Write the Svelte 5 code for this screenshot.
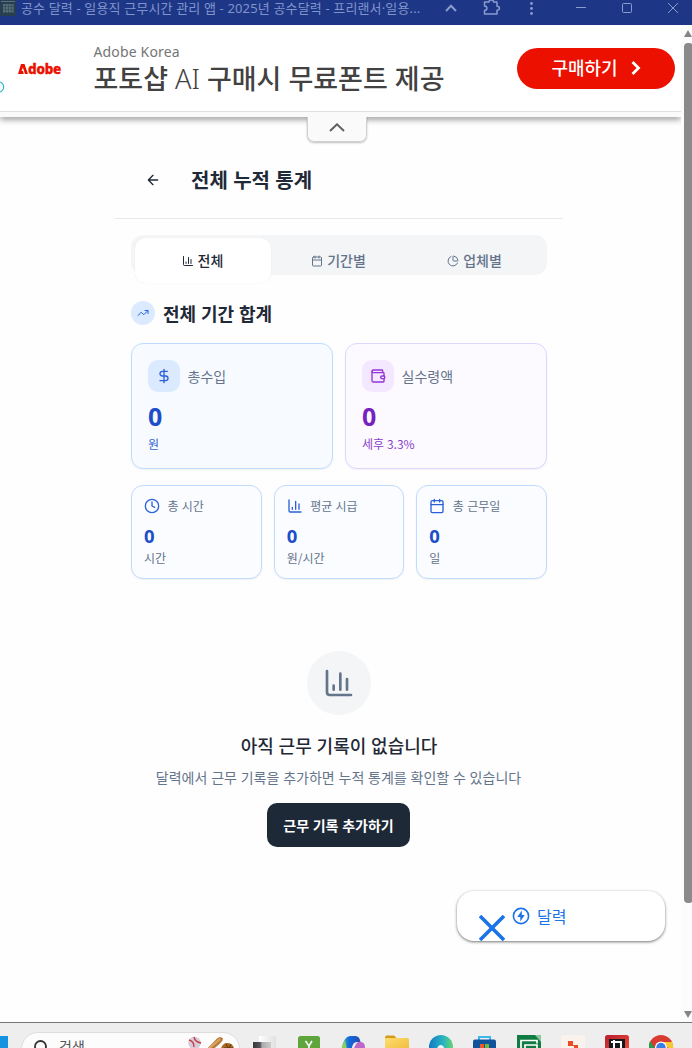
<script>
  const tabs = [
    { label: '전체', icon: 'chart', active: true },
    { label: '기간별', icon: 'calendar', active: false },
    { label: '업체별', icon: 'pie', active: false },
  ];
  const totals = [
    { label: '총수입', value: '0', note: '원', icon: 'dollar', tone: 'blue' },
    { label: '실수령액', value: '0', note: '세후 3.3%', icon: 'wallet', tone: 'purple' },
  ];
  const stats = [
    { label: '총 시간', value: '0', unit: '시간', icon: 'clock' },
    { label: '평균 시급', value: '0', unit: '원/시간', icon: 'chart' },
    { label: '총 근무일', value: '0', unit: '일', icon: 'calendar' },
  ];
</script>

{#snippet icon(name, size, stroke = 2)}
  <svg class="icon" width={size} height={size} viewBox="0 0 24 24" fill="none" stroke="currentColor" stroke-width={stroke} stroke-linecap="round" stroke-linejoin="round">
    {#if name === 'chart'}
      <path d="M3 3v16a2 2 0 0 0 2 2h16M18 17V9M13 17V5M8 17v-3" />
    {:else if name === 'calendar'}
      <path d="M8 2v4M16 2v4M3 10h18" /><rect x="3" y="4" width="18" height="18" rx="2" />
    {:else if name === 'pie'}
      <path d="M21 12c.55 0 1-.45.95-1a10 10 0 0 0-8.95-8.95c-.55-.05-1 .4-1 .95v8a1 1 0 0 0 1 1z" /><path d="M21.21 15.89A10 10 0 1 1 8 2.83" />
    {:else if name === 'trend'}
      <path d="M22 7l-8.5 8.5-5-5L2 17M16 7h6v6" />
    {:else if name === 'dollar'}
      <path d="M12 2v20M17 5H9.5a3.5 3.5 0 0 0 0 7h5a3.5 3.5 0 0 1 0 7H6" />
    {:else if name === 'wallet'}
      <path d="M19 7V4a1 1 0 0 0-1-1H5a2 2 0 0 0 0 4h15a1 1 0 0 1 1 1v4h-3a2 2 0 0 0 0 4h3a1 1 0 0 0 1-1v-2a1 1 0 0 0-1-1" /><path d="M3 5v14a2 2 0 0 0 2 2h15a1 1 0 0 0 1-1v-4" />
    {:else if name === 'clock'}
      <circle cx="12" cy="12" r="10" /><path d="M12 6v6l4 2" />
    {:else if name === 'back'}
      <path d="M12 19l-7-7 7-7M19 12H5" />
    {/if}
  </svg>
{/snippet}

<div class="window">
  <header class="titlebar">
    <svg class="favicon" width="16" height="16" viewBox="0 0 16 16">
      <rect width="16" height="16" rx="1.5" fill="#283f50" />
      <path d="M1 1.5h14" stroke="#587080" />
      <path d="M3 5h10M3 8h10M3 11h10M4 4v9M7 4v9M10 4v9M13 4v9" stroke="#6f8790" stroke-width=".8" />
    </svg>
    <span class="title">공수 달력 - 일용직 근무시간 관리 앱 - 2025년 공수달력 - 프리랜서·일용...</span>
    <svg class="controls" width="260" height="25" viewBox="0 0 260 25" fill="none" stroke="#899cd0" stroke-width="1.2">
      <path d="M14 11l5-5.2L24 11" stroke-width="2" />
      <path d="M52.500 2h4.500c0-2.600 4.500-2.600 4.500 0H65v4.200c3.200 0 3.200 4 0 4V14H52.500v-3.500c3.200-.2 3.200-4.400 0-4.600z" stroke-width="1.5" stroke-linejoin="round" />
      <g fill="#899cd0" stroke="none"><circle cx="99.5" cy="3.5" r="1.4" /><circle cx="99.5" cy="8.5" r="1.4" /><circle cx="99.5" cy="13.5" r="1.4" /></g>
      <path d="M144 7.5h10" stroke-width="1" />
      <rect x="190.5" y="3.5" width="9" height="9" rx="1" stroke-width="1" />
      <path d="M236 3l10 10M246 3l-10 10" stroke-width="1" />
    </svg>
  </header>

  <div class="viewport">
    <div class="page">
      <section class="ad">
        <svg class="adinfo" width="5" height="14" viewBox="0 0 5 14"><circle cx="-1.5" cy="7" r="5.2" fill="none" stroke="#27b5ca" stroke-width="1.1" /></svg>
        <div class="brand"><svg width="10" height="10" viewBox="0 0 10 10"><path fill="#eb1000" d="M3 0h3.5L10 10H7L4.9 3.5 3.6 7H5l.8 3H0z" /></svg><span>dobe</span></div>
        <div class="adtext">
          <span class="advertiser">Adobe Korea</span>
          <strong>포토샵 <i>AI</i> 구매시 무료폰트 제공</strong>
        </div>
        <button class="buy">구매하기
          <svg width="10" height="14" viewBox="0 0 10 14" fill="none" stroke="#fff" stroke-width="2.8"><path d="M1.5 1l6 6-6 6" /></svg>
        </button>
      </section>
      <div class="adedge">
        <div class="collapse"><svg width="16" height="9" viewBox="0 0 16 9" fill="none" stroke="#616161" stroke-width="2"><path d="M1 8l7-6.700L15 8" /></svg></div>
      </div>

      <main>
        <div class="pagehead">
          <span class="back">{@render icon('back', 16)}</span>
          <h1>전체 누적 통계</h1>
        </div>
        <div class="body">
          <nav>
            {#each tabs as tab}
              <button class="tab" class:active={tab.active}>{@render icon(tab.icon, 12)}<span>{tab.label}</span></button>
            {/each}
          </nav>
          <div class="section">
            <span class="dot">{@render icon('trend', 12)}</span>
            <h2>전체 기간 합계</h2>
          </div>
          <div class="totals">
            {#each totals as card}
              <article class={card.tone}>
                <div class="cardhead"><span class="badge">{@render icon(card.icon, 16)}</span><span>{card.label}</span></div>
                <b>{card.value}</b>
                <small>{card.note}</small>
              </article>
            {/each}
          </div>
          <div class="stats">
            {#each stats as card}
              <article>
                <div class="stathead">{@render icon(card.icon, 16)}<span>{card.label}</span></div>
                <b>{card.value}</b>
                <small>{card.unit}</small>
              </article>
            {/each}
          </div>
          <div class="empty">
            <span class="circle">{@render icon('chart', 32)}</span>
            <h3>아직 근무 기록이 없습니다</h3>
            <p>달력에서 근무 기록을 추가하면 누적 통계를 확인할 수 있습니다</p>
            <button class="add">근무 기록 추가하기</button>
          </div>
        </div>
      </main>

      <div class="fab">
        <svg class="close" width="26" height="26" viewBox="0 0 26 26" stroke="#1a73e8" stroke-width="3.6"><path d="M1 1l24 24M25 1L1 25" /></svg>
        <svg class="bolt" width="18" height="18" viewBox="0 0 18 18"><circle cx="9" cy="9" r="7.6" fill="none" stroke="#1a73e8" stroke-width="1.6" /><path d="M9.8 3.5L5.3 10h3v4.5L12.7 8H9.8z" fill="#1a73e8" /></svg>
        <span>달력</span>
      </div>
    </div>
    <div class="scrollbar">
      <i class="up"></i><i class="thumb"></i><i class="down"></i>
    </div>
  </div>

  <footer class="taskbar">
    <svg class="start" width="8" height="13" viewBox="0 0 8 13"><rect width="8" height="13" fill="#1593e0" /></svg>
    <div class="search">
      <svg width="15" height="18" viewBox="0 0 15 18" fill="none" stroke="#333" stroke-width="1.8"><circle cx="7.5" cy="6.5" r="5.5" /><path d="M11 11l4 4" /></svg>
      <span>검색</span>
      <svg class="sport" width="50" height="16" viewBox="0 0 50 16">
        <circle cx="7.5" cy="7" r="6.3" fill="#d9cbdc" />
        <path d="M2 4q5 1 5 7M7 1q1 5 7 6" fill="none" stroke="#c03c3f" stroke-width="1.3" />
        <path d="M16 17L30 2.500q3.500-3 6 0 0 3-3 5L21 18z" fill="#b97e3d" /><path d="M19 15L33 3" stroke="#dda762" stroke-width="1.8" />
        <path d="M34 17q-1-8 5-10 8-1 9 10z" fill="#a8681f" /><path d="M37 12h9M39 8l4 8M44 8l-4 8" stroke="#5c3410" />
      </svg>
    </div>
    <svg class="apps" width="452" height="25" viewBox="240 0 452 25">
      <defs>
        <linearGradient id="edge" x1="0" x2="1"><stop stop-color="#1479c5" /><stop offset=".6" stop-color="#28b5c0" /><stop offset="1" stop-color="#68d56b" /></linearGradient>
        <linearGradient id="pilot" x1="0" x2="1"><stop stop-color="#42c4bb" /><stop offset=".4" stop-color="#1469dc" /><stop offset="1" stop-color="#254db5" /></linearGradient>
        <linearGradient id="folder" x1="0" y1="0" x2="1" y2="1"><stop stop-color="#ffdc70" /><stop offset="1" stop-color="#efb936" /></linearGradient>
        <linearGradient id="red" x1="0" y1="0" x2="1" y2="1"><stop stop-color="#b91e32" /><stop offset="1" stop-color="#ef5035" /></linearGradient>
        <linearGradient id="light" x1="0" x2="1"><stop stop-color="#fff" /><stop offset="1" stop-color="#e0e0e2" /></linearGradient>
        <linearGradient id="dark" x1="0" x2="1"><stop stop-color="#36373d" /><stop offset=".4" stop-color="#55565b" /><stop offset=".5" stop-color="#aaa" /><stop offset="1" stop-color="#ccc" /></linearGradient>
      </defs>
      <rect x="259" y="13" width="17" height="16" fill="url(#light)" /><rect x="253" y="19" width="18" height="12" fill="url(#dark)" />
      <rect x="298" y="13" width="22" height="20" rx="2.5" fill="#5ea53b" /><path d="M305.500 18l3.500 5 3-5M309 23v4" fill="none" stroke="#fff" stroke-width="1.6" />
      <path d="M341.500 27q2-14 9-14h5q4 0 5 6h-4q-4 0-5 8z" fill="url(#pilot)" /><path d="M341.500 27q1-7 3.500-10l2 10z" fill="#8bcf5a" /><path d="M353 27l3-6q2-3 5-2 4 0 4 6v2z" fill="#bd67c9" />
      <path d="M385 14.5q0-2 2-2h7l3 3h-12z" fill="#d59a18" /><rect x="385" y="15" width="24" height="15" rx="1.5" fill="url(#folder)" />
      <circle cx="441" cy="24" r="12" fill="url(#edge)" /><path d="M437 28q0-6 4-6 3 0 4 6z" fill="#e9f7fb" />
      <path d="M479 17v-3h11v3" fill="none" stroke="#3bb9ec" stroke-width="2" /><rect x="473" y="16.500" width="23" height="15" rx="2" fill="#12529b" /><path d="M480 21h4v4h-4z" fill="#ee5730" /><path d="M485 21h4v4h-4z" fill="#75ba37" />
      <rect x="517" y="12" width="24" height="18" fill="#107c41" /><path d="M535 12h6v7z" fill="#8dc99c" /><path d="M521 28v-10.500h16v3M525 28v-6h12v4" fill="none" stroke="#fff" stroke-width="1.7" />
      <rect x="561" y="12" width="24" height="18" rx="2" fill="#faf3ed" /><path d="M568 18h5v4h5v4h-4v-3h-6z" fill="#e84c20" />
      <rect x="605" y="12" width="24" height="18" rx="2.500" fill="url(#red)" /><rect x="609" y="16" width="16" height="14" fill="#15171a" /><path d="M611 19h10v8M614 17v10" fill="none" stroke="#fff" stroke-width="2" />
      <circle cx="661" cy="24" r="12" fill="#da3b30" /><path d="M661 19h11q2 4 1 10l-6-5z" fill="#f8c832" /><path d="M650 18l7 10h-7q-2-5 0-10z" fill="#2b9a4c" /><circle cx="661" cy="24.500" r="6" fill="#fff" /><circle cx="661" cy="24.500" r="4.700" fill="#3d7de8" />
    </svg>
  </footer>
</div>

<style>
  :global(body) { margin: 0; overflow: hidden; }
  * { box-sizing: border-box; }
  .window { width: 692px; height: 1048px; display: flex; flex-direction: column; overflow: hidden; background: #fefefe; font-family: "Noto Sans", "Noto Sans CJK KR", sans-serif; color: #1f2937; }
  button { font: inherit; border: 0; padding: 0; background: none; color: inherit; }
  h1, h2, h3, p { margin: 0; }
  svg { display: block; flex: none; }

  .titlebar { height: 25px; flex: none; background: #1d3786; display: flex; align-items: flex-start; color: #8194cb; }
  .title { width: 411px; margin-left: 5px; font-size: 13px; line-height: 17px; letter-spacing: .15px; white-space: nowrap; }

  .viewport { height: 997px; flex: none; display: flex; }
  .page { width: 681px; position: relative; }
  .scrollbar { width: 11px; display: flex; flex-direction: column; align-items: center; padding: 5px 0 4px; background: #fcfcfc; }
  .scrollbar i { flex: none; }
  .up { margin-left: 3px; border: 4.500px solid transparent; border-top: 0; border-bottom: 7px solid #858585; }
  .thumb { width: 9px; height: 860px; margin: 6px 0 auto 3px; border-radius: 4px; background: #8a8a8a; }
  .down { margin-left: 3px; border: 4.500px solid transparent; border-bottom: 0; border-top: 7px solid #858585; }

  .ad { height: 87px; border-bottom: 1px solid #e0e0e0; display: flex; align-items: flex-start; background: #fff; }
  .adinfo { margin-top: 55px; }
  .brand { width: 88.500px; padding: 39px 0 0 13px; display: flex; color: #eb1000; font-size: 13.500px; font-weight: 800; line-height: 10px; letter-spacing: -.2px; }
  .brand span { -webkit-text-stroke: .4px #eb1000; }
  .adtext { width: 423.500px; display: flex; flex-direction: column; padding-top: 17px; white-space: nowrap; }
  .advertiser { font-size: 14px; line-height: 20px; letter-spacing: .15px; color: #757575; }
  .adtext strong { font-size: 27px; line-height: 34px; font-weight: 500; color: #424242; }
  .adtext i { font-style: normal; font-weight: 300; }
  .buy { width: 158px; height: 41px; margin-top: 23px; border-radius: 21px; background: #eb1000; color: #fff; font-size: 18px; line-height: 24px; font-weight: 500; display: flex; align-items: center; justify-content: center; gap: 13px; padding-bottom: 2px; }
  .buy svg { margin-top: 1px; }
  .adedge { height: 5px; background: #fafafa; box-shadow: 0 2px 6px rgba(0,0,0,.5); display: flex; justify-content: center; clip-path: inset(0 0 -40px 0); }
  .collapse { width: 60px; height: 30px; flex: none; margin-right: 7px; background: linear-gradient(#fafafa, #fafafa) padding-box; border: 1px solid #d0d0d0; border-top: 0; border-radius: 0 0 7px 7px; box-shadow: 0 1px 2px rgba(0,0,0,.25); display: flex; justify-content: center; padding-top: 11px; clip-path: polygon(1px 0, 59px 0, 59px 5px, 64px 5px, 64px 34px, -4px 34px, -4px 5px, 1px 5px); }

  main { width: 448px; margin-left: 115px; word-spacing: .01em; }
  .pagehead { height: 102px; border-bottom: 1px solid #e7e9ec; display: flex; align-items: center; padding: 24px 0 0 30px; }
  .pagehead h1 { margin: 2px 0 0 30px; font-size: 20px; line-height: 28px; font-weight: 700; }
  .body { padding: 16px 16px 0; }
  nav { height: 40px; border-radius: 12px; background: #f3f5f7; display: grid; grid-template-columns: repeat(3, 1fr); align-items: start; padding: 3px 4px 0; }
  .tab { height: 45px; border-radius: 10px; display: flex; align-items: center; justify-content: center; gap: 4px; padding-right: 1px; font-size: 14px; line-height: 20px; font-weight: 500; color: #64748b; }
  .tab span { margin-top: 1px; }
  .tab.active { background: #fff; color: #1f2937; box-shadow: 0 0 1px rgba(0,0,0,.12); }
  .section { display: flex; align-items: center; gap: 8px; height: 24px; margin-top: 26px; }
  .dot { width: 24px; height: 24px; border-radius: 50%; background: #dbeafe; color: #2563eb; display: grid; place-items: center; }
  h2 { margin-top: 1px; font-size: 18px; line-height: 28px; font-weight: 700; }
  .totals { display: grid; grid-template-columns: 1fr 1fr; gap: 12px; margin-top: 18px; }
  article { display: flex; flex-direction: column; border: 1px solid #bfdbfe; border-radius: 12px; box-shadow: 0 1px 2px rgba(0,0,0,.05); background: #fafcff; white-space: nowrap; }
  article small { font-family: "Noto Sans CJK KR", "Noto Sans", sans-serif; }
  .totals article { height: 126px; padding: 16px; background: #f7fbff; }
  .totals .purple { background: #fdfaff; border-color: #ddd6fe; }
  .cardhead { display: flex; align-items: center; gap: 8px; font-size: 14px; line-height: 20px; color: #64748b; }
  .cardhead > span:last-child { margin: 1px 0 0 -.500px; }
  .badge { width: 32px; height: 32px; border-radius: 10px; background: #dbeafe; color: #2b60d8; display: grid; place-items: center; }
  .purple .badge { background: #f3e8ff; color: #9333d8; }
  .totals b { margin-top: 8px; font-size: 25px; line-height: 32px; color: #1d4ec8; }
  .totals small { margin-top: 4px; font-size: 12px; line-height: 16px; color: #3564cf; }
  .totals .purple b { color: #7622be; }
  .totals .purple small { color: #8a42cc; }
  .stats { display: grid; grid-template-columns: repeat(3, 1fr); gap: 12px; margin-top: 16px; }
  .stats article { height: 94px; padding: 12px; }
  .stathead { display: flex; align-items: center; gap: 8px; height: 16px; font-size: 12px; line-height: 16px; color: #64748b; }
  .stathead span { margin: 1px 0 0 -.500px; }
  .stathead :global(svg) { color: #2b60d8; }
  .stats b { margin-top: 8px; font-size: 18.500px; line-height: 28px; color: #1d4ec8; }
  .stats small { font-size: 12px; line-height: 16px; color: #64748b; }
  .empty { display: flex; flex-direction: column; align-items: center; margin-top: 72px; white-space: nowrap; }
  .circle { width: 64px; height: 64px; border-radius: 50%; background: #f3f5f7; color: #64748b; display: grid; place-items: center; }
  h3 { margin-top: 17px; font-size: 18px; line-height: 28px; font-weight: 500; }
  .empty p { margin: 8px 1px 0 0; font-size: 14px; line-height: 20px; color: #64748b; }
  .add { width: 143px; height: 44px; margin: 15px 1px 0 0; border-radius: 10px; background: #1e2937; color: #fff; font-size: 14px; line-height: 20px; font-weight: 700; padding-top: 1px; }

  .fab { position: absolute; left: 457px; top: 866px; width: 208px; height: 50px; border-radius: 17px; background: #fff; box-shadow: 0 1px 3px rgba(0,0,0,.55); display: flex; align-items: center; color: #1a73e8; font-size: 16px; }
  .close { margin: 24px 7px 0 22px; }
  .fab span { margin-left: 7px; }

  .taskbar { height: 26px; flex: none; border-top: 1px solid #777; background: #eee; display: flex; align-items: flex-start; overflow: hidden; }
  .start { margin-top: 13px; }
  .search { width: 219px; height: 34px; margin: 9px 0 0 13px; border-radius: 17px; border: 1px solid #ddd; background: #fcfcfc; display: flex; align-items: flex-start; padding: 7px 0 0 11px; flex: none; }
  .search span { width: 128px; margin: -1px 0 0 11px; font-size: 14px; line-height: 16px; color: #555; }
  .sport { margin-top: -4px; }
</style>
